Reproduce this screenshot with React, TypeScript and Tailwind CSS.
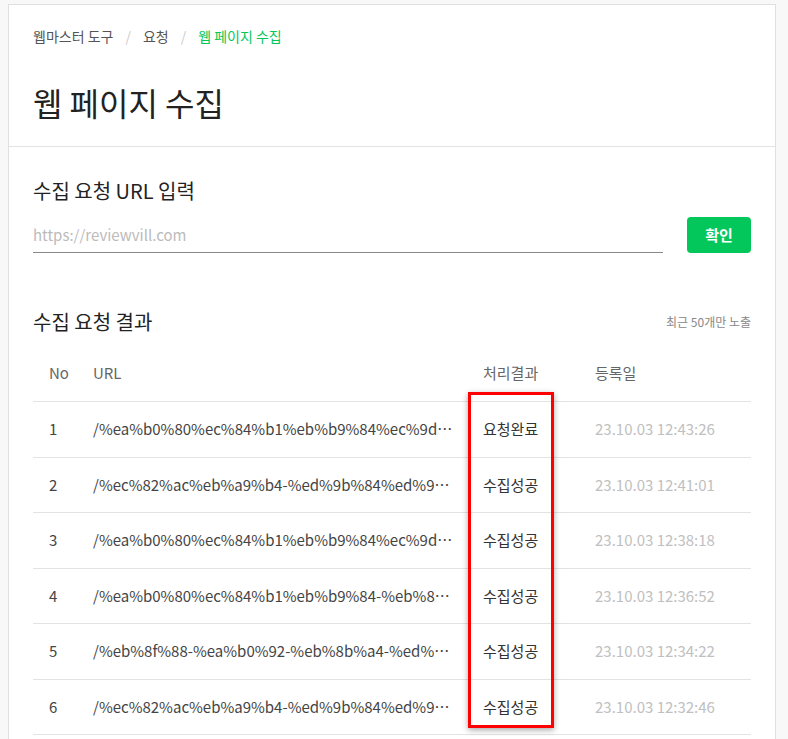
const rows = [
  { no: 1, url: "/%ea%b0%80%ec%84%b1%eb%b9%84%ec%9d%98-%ea%b0%91%ed%8c%90%ec%99%95", status: "요청완료", date: "23.10.03 12:43:26" },
  { no: 2, url: "/%ec%82%ac%eb%a9%b4-%ed%9b%84%ed%9a%a8%ea%b8%b0-%eb%a6%ac%eb%b7%b0", status: "수집성공", date: "23.10.03 12:41:01" },
  { no: 3, url: "/%ea%b0%80%ec%84%b1%eb%b9%84%ec%9d%98-%eb%81%9d%ed%8c%90%ec%99%95", status: "수집성공", date: "23.10.03 12:38:18" },
  { no: 4, url: "/%ea%b0%80%ec%84%b1%eb%b9%84-%eb%8b%a8%ed%92%88-%ed%9b%84%ea%b8%b0", status: "수집성공", date: "23.10.03 12:36:52" },
  { no: 5, url: "/%eb%8f%88-%ea%b0%92-%eb%8b%a4-%ed%95%98%eb%8a%94-%ec%a0%9c%ed%92%88", status: "수집성공", date: "23.10.03 12:34:22" },
  { no: 6, url: "/%ec%82%ac%eb%a9%b4-%ed%9b%84%ed%9a%a8%ea%b8%b0-%ec%b6%94%ec%b2%9c", status: "수집성공", date: "23.10.03 12:32:46" },
];

export default function App() {
  return (
    <div
      className="min-h-screen bg-[#f8f8f8] pl-2 pr-3 pt-1"
      style={{ fontFamily: '"Noto Sans CJK KR", "Noto Sans", sans-serif' }}
    >
      <div className="border border-[#e0e0e0] bg-white min-h-[760px]">
        {/* Header */}
        <div className="border-b border-[#e3e3e3] px-6 pt-[21px] pb-6">
          <nav className="flex items-center text-[14px] leading-5 text-[#555]">
            <span>웹마스터 도구</span>
            <span className="px-3 text-[#ccc]">/</span>
            <span>요청</span>
            <span className="px-3 text-[#ccc]">/</span>
            <span className="text-[#03c75a]">웹 페이지 수집</span>
          </nav>
          <h1 className="mt-9 text-[32px] leading-10 text-[#222]">웹 페이지 수집</h1>
        </div>

        <div className="px-6 pt-[30px]">
          {/* URL input */}
          <h2 className="text-[20px] leading-7 text-[#222]">수집 요청 URL 입력</h2>
          <div className="mt-3 flex items-end gap-6">
            <input
              className="h-9 flex-1 border-b border-[#888] bg-transparent text-[15px] text-[#333] outline-none placeholder:text-[#bbb]"
              placeholder="https://reviewvill.com"
            />
            <button className="h-9 w-16 rounded bg-[#03c75a] text-[15px] font-bold text-white">확인</button>
          </div>

          {/* Results */}
          <div className="mt-[55px] flex items-center justify-between">
            <h2 className="text-[20px] leading-7 text-[#222]">수집 요청 결과</h2>
            <span className="text-[12px] text-[#888]">최근 50개만 노출</span>
          </div>

          <div className="relative mt-[9px] text-[15px]">
            <div className="flex h-[57px] items-center border-b border-[#e3e3e3] text-[#666]">
              <div className="w-11 shrink-0 pl-4">No</div>
              <div className="w-[390px] shrink-0 pl-4">URL</div>
              <div className="w-28 shrink-0 pl-4">처리결과</div>
              <div className="flex-1 pl-4">등록일</div>
            </div>
            {rows.map((r) => (
              <div key={r.no} className="flex h-[55.5px] items-center border-b border-[#e3e3e3]">
                <div className="w-11 shrink-0 pl-4 text-[#444]">{r.no}</div>
                <div className="w-[390px] shrink-0 truncate pl-4 pr-3 text-[#444]">{r.url}</div>
                <div className="w-28 shrink-0 pl-4 text-[#333]">{r.status}</div>
                <div className="flex-1 pl-4 text-[#c0c0c0]">{r.date}</div>
              </div>
            ))}

            {/* annotation */}
            <div className="pointer-events-none absolute left-[435px] top-[47px] h-[336px] w-[86px] border-[3px] border-[#ff0000] shadow-[0_2px_6px_rgba(0,0,0,0.35)]" />
          </div>
        </div>
      </div>
    </div>
  );
}
